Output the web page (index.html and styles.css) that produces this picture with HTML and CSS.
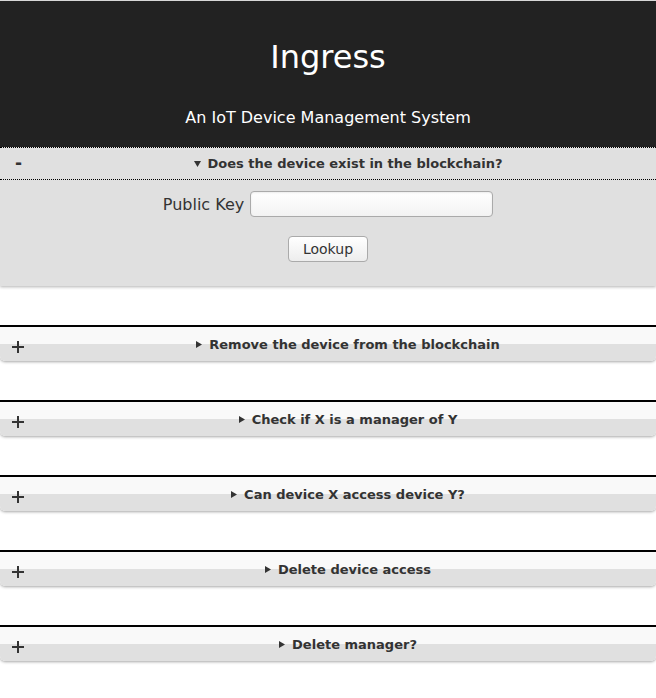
FILE: index.html
```html
<!DOCTYPE html>
<html>
<head>
<meta charset="utf-8">
<title>Ingress</title>
<link rel="stylesheet" href="styles.css">
</head>
<body>
<header class="masthead">
  <h1 class="title">Ingress</h1>
  <p class="subtitle">An IoT Device Management System</p>
</header>

<section class="panel panel-open">
  <div class="panel-head">
    <span class="toggle toggle-minus">-</span>
    <span class="panel-title"><svg class="tri" width="7" height="6" viewBox="0 0 7 6"><path d="M0 0H7L3.5 6Z" fill="#333"/></svg>Does the device exist in the blockchain?</span>
  </div>
  <div class="panel-body">
    <div class="field">
      <label class="field-label" for="pk">Public Key</label>
      <input class="field-input" id="pk" type="text">
    </div>
    <button class="btn" type="button">Lookup</button>
  </div>
</section>

<section class="panel panel-closed">
  <div class="panel-head">
    <span class="toggle"><svg width="12" height="12" viewBox="0 0 12 12"><path d="M0 6H12M6 0V12" stroke="#333" stroke-width="2"/></svg></span>
    <span class="panel-title"><svg class="tri" width="6" height="7" viewBox="0 0 6 7"><path d="M0 0V7L6 3.5Z" fill="#333"/></svg>Remove the device from the blockchain</span>
  </div>
</section>

<section class="panel panel-closed">
  <div class="panel-head">
    <span class="toggle"><svg width="12" height="12" viewBox="0 0 12 12"><path d="M0 6H12M6 0V12" stroke="#333" stroke-width="2"/></svg></span>
    <span class="panel-title"><svg class="tri" width="6" height="7" viewBox="0 0 6 7"><path d="M0 0V7L6 3.5Z" fill="#333"/></svg>Check if X is a manager of Y</span>
  </div>
</section>

<section class="panel panel-closed">
  <div class="panel-head">
    <span class="toggle"><svg width="12" height="12" viewBox="0 0 12 12"><path d="M0 6H12M6 0V12" stroke="#333" stroke-width="2"/></svg></span>
    <span class="panel-title"><svg class="tri" width="6" height="7" viewBox="0 0 6 7"><path d="M0 0V7L6 3.5Z" fill="#333"/></svg>Can device X access device Y?</span>
  </div>
</section>

<section class="panel panel-closed">
  <div class="panel-head">
    <span class="toggle"><svg width="12" height="12" viewBox="0 0 12 12"><path d="M0 6H12M6 0V12" stroke="#333" stroke-width="2"/></svg></span>
    <span class="panel-title"><svg class="tri" width="6" height="7" viewBox="0 0 6 7"><path d="M0 0V7L6 3.5Z" fill="#333"/></svg>Delete device access</span>
  </div>
</section>

<section class="panel panel-closed">
  <div class="panel-head">
    <span class="toggle"><svg width="12" height="12" viewBox="0 0 12 12"><path d="M0 6H12M6 0V12" stroke="#333" stroke-width="2"/></svg></span>
    <span class="panel-title"><svg class="tri" width="6" height="7" viewBox="0 0 6 7"><path d="M0 0V7L6 3.5Z" fill="#333"/></svg>Delete manager?</span>
  </div>
</section>
</body>
</html>
```

FILE: styles.css
```css
html, body {
  margin: 0;
  padding: 0;
  background: #fff;
  font-family: "DejaVu Sans", "Liberation Sans", sans-serif;
  color: #333;
}

.masthead {
  background: #222;
  border-top: 1px solid #d8d8d8;
  padding: 37px 0 20px;
  display: flex;
  flex-direction: column;
  align-items: center;
  gap: 32px;
  color: #fff;
}

.title {
  margin: 0;
  font-size: 32px;
  font-weight: normal;
  line-height: 38px;
}

.subtitle {
  margin: 0;
  font-size: 16px;
  line-height: 19px;
}

.panel {
  margin-bottom: 39px;
}

.panel-open {
  background: #e0e0e0;
  border-top: 1px dotted #000;
  box-shadow: 0 1px 3px rgba(0, 0, 0, 0.3);
}

.panel-open .panel-head {
  height: 31px;
  border-bottom: 1px dotted #000;
}

.panel-closed {
  border-top: 2px solid #000;
}

.panel-closed .panel-head {
  height: 34px;
  background: linear-gradient(to bottom, #f9f9f9 0, #f9f9f9 50%, #e0e0e0 50%, #e0e0e0 100%);
  border-radius: 0 0 5px 5px;
  box-shadow: 0 1px 3px rgba(0, 0, 0, 0.35);
}

.panel-closed .panel-title {
  padding-top: 1px;
}

.panel-head {
  display: grid;
  grid-template-columns: 40px 1fr;
  align-items: center;
}

.toggle {
  padding-left: 12px;
  display: flex;
  align-items: center;
  margin-top: 5px;
}

.toggle-minus {
  padding-left: 15px;
  margin-top: 0;
  font-weight: bold;
  font-size: 17px;
  line-height: 1;
}

.panel-title {
  text-align: center;
  font-size: 13px;
  font-weight: bold;
  color: #333;
  line-height: 16px;
}

.tri {
  margin-right: 7px;
  vertical-align: 1px;
}

.panel-body {
  padding: 11px 0 24px;
  display: flex;
  flex-direction: column;
  align-items: center;
  gap: 19px;
}

.field {
  display: flex;
  align-items: center;
  gap: 6px;
}

.field-label {
  font-size: 16px;
  color: #333;
}

.field-input {
  box-sizing: border-box;
  width: 243px;
  height: 26px;
  margin: 0;
  border: 1px solid #aaa;
  border-radius: 4px;
  background: linear-gradient(to bottom, #fff, #f3f3f3);
  box-shadow: inset 0 1px 2px rgba(0, 0, 0, 0.08);
  font-family: inherit;
  font-size: 14px;
}

.btn {
  box-sizing: border-box;
  width: 80px;
  height: 26px;
  margin: 0;
  border: 1px solid #aaa;
  border-radius: 4px;
  background: linear-gradient(to bottom, #fff, #ededed);
  color: #333;
  font-family: inherit;
  font-size: 14px;
  padding: 0;
}
```
